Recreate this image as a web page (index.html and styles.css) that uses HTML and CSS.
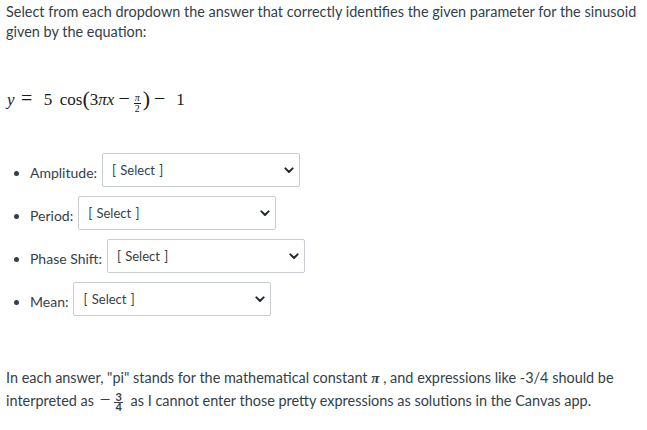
FILE: index.html
```html
<!DOCTYPE html>
<html lang="en">
<head>
<meta charset="utf-8">
<title>Sinusoid parameters</title>
<link rel="stylesheet" href="styles.css">
</head>
<body>
<p class="intro">Select from each dropdown the answer that correctly identifies the given parameter for the sinusoid given by the equation:</p>
<div class="eq"><span class="mi v-y">y</span><span class="mo rel">=</span><span class="mn five">5</span><span class="fn">cos</span><span class="paren">(</span><span class="mn">3</span><span class="mi">π</span><span class="mi">x</span><span class="mo bin">−</span><span class="frac"><span class="num">π</span><span class="den">2</span></span><span class="paren">)</span><span class="mo bin">−</span><span class="mn one">1</span></div>
<ul class="params">
<li><span class="label">Amplitude:</span><span class="select"><span class="sel-text">[ Select ]</span><svg class="chev" width="10" height="7" viewBox="0 0 10 7"><path d="M1.4 1.4 L5 5 L8.6 1.4" /></svg></span></li>
<li><span class="label">Period:</span><span class="select"><span class="sel-text">[ Select ]</span><svg class="chev" width="10" height="7" viewBox="0 0 10 7"><path d="M1.4 1.4 L5 5 L8.6 1.4" /></svg></span></li>
<li><span class="label">Phase Shift:</span><span class="select"><span class="sel-text">[ Select ]</span><svg class="chev" width="10" height="7" viewBox="0 0 10 7"><path d="M1.4 1.4 L5 5 L8.6 1.4" /></svg></span></li>
<li><span class="label">Mean:</span><span class="select"><span class="sel-text">[ Select ]</span><svg class="chev" width="10" height="7" viewBox="0 0 10 7"><path d="M1.4 1.4 L5 5 L8.6 1.4" /></svg></span></li>
</ul>
<p class="note">In each answer, "pi" stands for the mathematical constant <span class="pi-sym">π</span> , and expressions like -3/4 should be interpreted as <span class="neg">−</span><span class="sfrac"><span class="snum">3</span><span class="sden">4</span></span> as I cannot enter those pretty expressions as solutions in the Canvas app.</p>
</body>
</html>
```

FILE: styles.css
```css
html, body {
  margin: 0;
  padding: 0;
  background: #ffffff;
}

body {
  padding: 2px 6px 0 6px;
  font-family: Lato, "Open Sans", "Liberation Sans", sans-serif;
  font-size: 14px;
  line-height: 20px;
  color: #333f48;
}

.intro {
  margin: 0;
  font-size: 14.45px;
}

/* equation */
.eq {
  margin-top: 44px;
  height: 24px;
  line-height: 24px;
  font-family: "Liberation Serif", "DejaVu Serif", serif;
  font-size: 17px;
  color: #1a1a1a;
  white-space: nowrap;
  padding-left: 1px;
}

.mi {
  font-style: italic;
}

.mo {
  font-size: 20px;
}

.rel {
  margin: 0 11.5px 0 6.5px;
}

.five {
  margin-right: 7.5px;
}

.fn {
  margin-right: 0;
}

.paren {
  font-size: 22px;
  vertical-align: -1px;
  line-height: 10px;
}

.bin {
  margin: 0 4px 0 4px;
}

.frac {
  display: inline-flex;
  flex-direction: column;
  align-items: center;
  vertical-align: 4px;
  font-size: 10px;
  line-height: 8px;
  margin: 0 2px 0 0;
}

.frac .num {
  font-style: italic;
  border-bottom: 0.5px solid #1a1a1a;
  padding: 0 1px 1px 1px;
}

.frac .den {
  padding-top: 1px;
}

.one {
  margin-left: 7px;
}

/* parameter list */
.params {
  margin: 43px 0 0 0;
  padding-left: 24px;
}

.params li {
  margin: 0;
}

.params li + li {
  margin-top: 9px;
}

.label {
  margin-right: 5px;
}

.select {
  display: inline-flex;
  align-items: center;
  justify-content: space-between;
  box-sizing: border-box;
  width: 198px;
  height: 34px;
  padding: 0 5px 0 9px;
  border: 1px solid #c7cdd1;
  border-radius: 2px;
  background: #ffffff;
  vertical-align: 3px;
  font-size: 13px;
  color: #333f48;
}

.sel-text {
  word-spacing: 1px;
}

.chev {
  display: block;
  flex: none;
}

.chev path {
  fill: none;
  stroke: #1f2a31;
  stroke-width: 2;
  stroke-linecap: round;
  stroke-linejoin: round;
}

/* note */
.note {
  margin: 51px 0 0 0;
  line-height: 21px;
  font-size: 14.45px;
}

.pi-sym {
  font-family: "Liberation Serif", "DejaVu Serif", serif;
  font-style: italic;
  font-weight: bold;
  font-size: 15px;
}

.neg {
  font-family: "Liberation Serif", "DejaVu Serif", serif;
  font-size: 19px;
  margin: 0 4px 0 2px;
}

.sfrac {
  display: inline-flex;
  flex-direction: column;
  align-items: center;
  vertical-align: middle;
  font-size: 11px;
  line-height: 8px;
  margin: 0 4px 0 0;
  font-weight: bold;
}

.snum {
  border-bottom: 0.5px solid #333f48;
  padding: 0 1px 1px 1px;
}
```
